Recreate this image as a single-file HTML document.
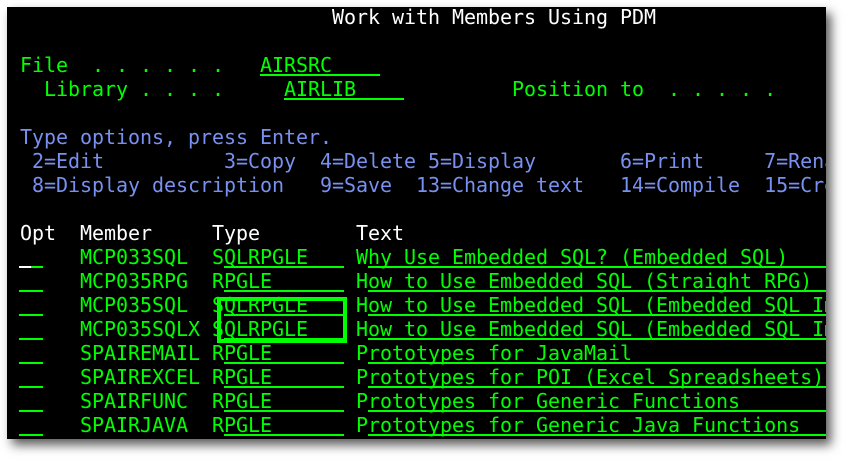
<!DOCTYPE html>
<html><head><meta charset="utf-8"><style>
html,body{margin:0;padding:0;background:#fff;width:849px;height:463px;overflow:hidden}
#scr{position:absolute;left:7px;top:7px;width:819px;height:432px;background:#000;box-shadow:5px 6px 10px rgba(0,0,0,0.65);overflow:hidden}
.r{position:absolute;left:13px;height:24px;line-height:24px;white-space:pre;font-family:"DejaVu Sans Mono","Liberation Mono",monospace;font-size:20px;color:#00ff00;letter-spacing:-0.04px}
.b{color:#7890f0}.w{color:#fff}
.u{position:absolute;height:2px;background:#00ff00}
</style></head><body>
<div id="scr">
<div class="r w" style="top:-2px">                          Work with Members Using PDM</div>
<div class="r" style="top:46px">File  . . . . . .   AIRSRC</div>
<div class="r" style="top:70px">  Library . . . .     AIRLIB             Position to  . . . . .</div>
<div class="r b" style="top:118px">Type options, press Enter.</div>
<div class="r b" style="top:142px"> 2=Edit          3=Copy  4=Delete 5=Display       6=Print     7=Rename</div>
<div class="r b" style="top:166px"> 8=Display description   9=Save  13=Change text   14=Compile  15=Create</div>
<div class="r w" style="top:214px">Opt  Member     Type        Text</div>
<div class="r" style="top:238px">     MCP033SQL  SQLRPGLE    Why Use Embedded SQL? (Embedded SQL)</div>
<div class="r" style="top:262px">     MCP035RPG  RPGLE       How to Use Embedded SQL (Straight RPG)</div>
<div class="r" style="top:286px">     MCP035SQL  SQLRPGLE    How to Use Embedded SQL (Embedded SQL Impl</div>
<div class="r" style="top:310px">     MCP035SQLX SQLRPGLE    How to Use Embedded SQL (Embedded SQL Impl</div>
<div class="r" style="top:334px">     SPAIREMAIL RPGLE       Prototypes for JavaMail</div>
<div class="r" style="top:358px">     SPAIREXCEL RPGLE       Prototypes for POI (Excel Spreadsheets)</div>
<div class="r" style="top:382px">     SPAIRFUNC  RPGLE       Prototypes for Generic Functions</div>
<div class="r" style="top:406px">     SPAIRJAVA  RPGLE       Prototypes for Generic Java Functions</div>

<div class="u" style="left:253px;top:67px;width:120px"></div>
<div class="u" style="left:277px;top:91px;width:120px"></div>

<div class="u" style="left:12px;top:259px;width:12px;background:#fff"></div>
<div class="u" style="left:24px;top:259px;width:12px"></div>
<div class="u" style="left:12px;top:283px;width:24px"></div>
<div class="u" style="left:12px;top:307px;width:24px"></div>
<div class="u" style="left:12px;top:331px;width:24px"></div>
<div class="u" style="left:12px;top:355px;width:24px"></div>
<div class="u" style="left:12px;top:379px;width:24px"></div>
<div class="u" style="left:12px;top:403px;width:24px"></div>
<div class="u" style="left:12px;top:427px;width:24px"></div>

<div class="u" style="left:217px;top:259px;width:120px"></div>
<div class="u" style="left:217px;top:283px;width:120px"></div>
<div class="u" style="left:217px;top:307px;width:120px"></div>
<div class="u" style="left:217px;top:331px;width:120px"></div>
<div class="u" style="left:217px;top:355px;width:120px"></div>
<div class="u" style="left:217px;top:379px;width:120px"></div>
<div class="u" style="left:217px;top:403px;width:120px"></div>
<div class="u" style="left:217px;top:427px;width:120px"></div>

<div class="u" style="left:361px;top:259px;width:460px"></div>
<div class="u" style="left:361px;top:283px;width:460px"></div>
<div class="u" style="left:361px;top:307px;width:460px"></div>
<div class="u" style="left:361px;top:331px;width:460px"></div>
<div class="u" style="left:361px;top:355px;width:460px"></div>
<div class="u" style="left:361px;top:379px;width:460px"></div>
<div class="u" style="left:361px;top:403px;width:460px"></div>
<div class="u" style="left:361px;top:427px;width:460px"></div>

<div style="position:absolute;left:210px;top:290px;width:122px;height:38px;border:4px solid #00ff00"></div>
</div>
</body></html>
